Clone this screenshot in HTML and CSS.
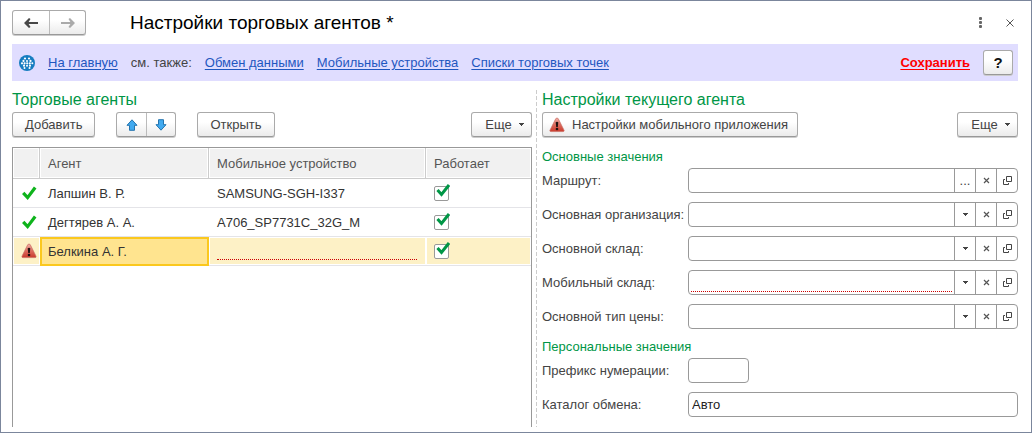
FILE: index.html
```html
<!DOCTYPE html>
<html lang="ru">
<head>
<meta charset="utf-8">
<title>Настройки торговых агентов</title>
<link rel="stylesheet" href="styles.css">
</head>
<body>
<svg class="sprite" aria-hidden="true">
  <defs>
    <linearGradient id="red" x1="0" y1="0" x2="0" y2="1">
      <stop offset="0" stop-color="#f3b3aa"/><stop offset="0.5" stop-color="#dc6a5d"/><stop offset="1" stop-color="#c93a2c"/>
    </linearGradient>
  </defs>
  <symbol id="warn" viewBox="0 0 16 16">
    <path d="M6.800 1.600Q8 .4 9.200 1.600L15 13.200Q15.400 14.600 14 14.600H2Q.6 14.600 1 13.200Z" fill="url(#red)" stroke="#c86a60" stroke-width=".7"/>
    <path d="M6.700 5.300Q8 4.300 9.300 5.300L8.800 10H7.200Z" fill="#1e1210"/>
    <circle cx="8" cy="12" r="1.300" fill="#1e1210"/>
  </symbol>
  <symbol id="ok" viewBox="0 0 16 16">
    <path d="M2.200 7.800L6.600 12.600L14.200 2.500" fill="none" stroke="#0eb31c" stroke-width="3.200"/>
  </symbol>
  <symbol id="up" viewBox="0 0 12 12">
    <path d="M6 .8L11 6.300H8.500V11.300H3.500V6.300H1Z" fill="#41aaf0" stroke="#2474ae"/>
  </symbol>
  <symbol id="caret" viewBox="0 0 5 3">
    <path d="M0 0H5V1H4V2H3V3H2V2H1V1H0Z" fill="#444"/>
  </symbol>
  <symbol id="clear" viewBox="0 0 7 7">
    <path d="M1 1L6 6M6 1L1 6" fill="none" stroke="#555" stroke-width="1.200"/>
  </symbol>
  <symbol id="open" viewBox="0 0 9 9">
    <path d="M3.500 .5H8.500V5.500H3.500ZM2 3.500H.5V8.500H5.500V7" fill="none" stroke="#444"/>
  </symbol>
</svg>

<div class="window">
  <header class="titlebar">
    <div class="button-group">
      <button class="nav" type="button" aria-label="Назад"><svg class="arrow" viewBox="0 0 14 10"><path d="M14 5H4" stroke="#484848" stroke-width="2"/><path d="M0 5L5 0L6.500 1L4 5L6.500 9L5 10Z" fill="#484848"/></svg></button>
      <button class="nav" type="button" aria-label="Вперед"><svg class="arrow" viewBox="0 0 14 10"><path d="M0 5H10" stroke="#aaa" stroke-width="2"/><path d="M14 5L9 0L7.500 1L10 5L7.500 9L9 10Z" fill="#aaa"/></svg></button>
    </div>
    <h1>Настройки торговых агентов *</h1>
    <button class="plain" type="button" aria-label="Меню"><svg class="dots" viewBox="0 0 3 11"><path d="M.5 0h2v.5h.5v2h-.5v.5h-2v-.5H0v-2h.5zM.5 4h2v.5h.5v2h-.5v.5h-2v-.5H0v-2h.5zM.5 8h2v.5h.5v2h-.5v.5h-2v-.5H0v-2h.5z" fill="#666"/></svg></button>
    <button class="plain" type="button" aria-label="Закрыть"><svg class="close" viewBox="0 0 8 8"><path d="M.5 .5L7.500 7.500M7.500 .5L.5 7.500" stroke="#555"/></svg></button>
  </header>

  <nav class="links">
    <svg class="logo" viewBox="0 0 16 16" aria-hidden="true">
      <circle cx="8" cy="8" r="8" fill="#167dc0"/>
      <g fill="#fff"><circle cx="6" cy="3.500" r="1.100"/><circle cx="10" cy="3.500" r="1.100"/><circle cx="4.500" cy="5.900" r="1.100"/><circle cx="8" cy="5.900" r="1"/><circle cx="11.500" cy="5.900" r="1.100"/><circle cx="3" cy="8.300" r="1.100"/><circle cx="5.600" cy="8.300" r="1.100"/><circle cx="8.200" cy="8.300" r="1.100"/><circle cx="10.800" cy="8.300" r="1.100"/><circle cx="13.300" cy="8.300" r="1"/><circle cx="5" cy="10.700" r="1.100"/><circle cx="8" cy="10.700" r="1"/><circle cx="11" cy="10.700" r="1.100"/><circle cx="5.500" cy="12.900" r="1"/><circle cx="10.500" cy="12.900" r="1"/></g>
    </svg>
    <a href="#home">На главную</a>
    <span>см. также:</span>
    <a href="#exchange">Обмен данными</a>
    <a href="#devices">Мобильные устройства</a>
    <a href="#points">Списки торговых точек</a>
    <a class="save" href="#save">Сохранить</a>
    <button class="btn help" type="button">?</button>
  </nav>

  <main class="panes">
    <section class="pane">
      <h2>Торговые агенты</h2>
      <div class="toolbar">
        <button class="btn" type="button">Добавить</button>
        <div class="button-group">
          <button class="move" type="button" aria-label="Вверх"><svg class="i12"><use href="#up"/></svg></button>
          <button class="move" type="button" aria-label="Вниз"><svg class="i12 flip"><use href="#up"/></svg></button>
        </div>
        <button class="btn" type="button">Открыть</button>
        <button class="btn more" type="button">Еще <svg class="caret"><use href="#caret"/></svg></button>
      </div>
      <div class="grid-box">
        <table>
          <colgroup><col class="c-state"><col class="c-agent"><col class="c-device"><col class="c-work"></colgroup>
          <thead><tr><th></th><th>Агент</th><th>Мобильное устройство</th><th>Работает</th></tr></thead>
          <tbody>
            <tr><td class="state"><svg class="i16"><use href="#ok"/></svg></td><td>Лапшин В. Р.</td><td>SAMSUNG-SGH-I337</td>
              <td><label class="check"><input type="checkbox" checked aria-label="Работает"><svg viewBox="0 0 16 16"><path d="M3.500 6L7.500 10.500L15 1" fill="none" stroke="#009646" stroke-width="3"/></svg></label></td></tr>
            <tr><td class="state"><svg class="i16"><use href="#ok"/></svg></td><td>Дегтярев А. А.</td><td>A706_SP7731C_32G_M</td>
              <td><label class="check"><input type="checkbox" checked aria-label="Работает"><svg viewBox="0 0 16 16"><path d="M3.500 6L7.500 10.500L15 1" fill="none" stroke="#009646" stroke-width="3"/></svg></label></td></tr>
            <tr class="selected"><td class="state"><svg class="i16"><use href="#warn"/></svg></td><td class="current">Белкина А. Г.</td><td><div class="required"></div></td>
              <td><label class="check"><input type="checkbox" checked aria-label="Работает"><svg viewBox="0 0 16 16"><path d="M3.500 6L7.500 10.500L15 1" fill="none" stroke="#009646" stroke-width="3"/></svg></label></td></tr>
          </tbody>
        </table>
      </div>
    </section>

    <div class="splitter"></div>

    <section class="pane">
      <h2>Настройки текущего агента</h2>
      <div class="toolbar">
        <button class="btn app" type="button"><svg class="i16"><use href="#warn"/></svg>Настройки мобильного приложения</button>
        <button class="btn more" type="button">Еще <svg class="caret"><use href="#caret"/></svg></button>
      </div>
      <h3>Основные значения</h3>
      <form class="form">
        <label for="route">Маршрут:</label>
        <div class="field"><input id="route" type="text"><button type="button" aria-label="Выбрать">...</button><button type="button" aria-label="Очистить"><svg class="i7"><use href="#clear"/></svg></button><button type="button" aria-label="Открыть"><svg class="i9"><use href="#open"/></svg></button></div>
        <label for="org">Основная организация:</label>
        <div class="field"><input id="org" type="text"><button type="button" aria-label="Выбрать"><svg class="caret"><use href="#caret"/></svg></button><button type="button" aria-label="Очистить"><svg class="i7"><use href="#clear"/></svg></button><button type="button" aria-label="Открыть"><svg class="i9"><use href="#open"/></svg></button></div>
        <label for="store">Основной склад:</label>
        <div class="field"><input id="store" type="text"><button type="button" aria-label="Выбрать"><svg class="caret"><use href="#caret"/></svg></button><button type="button" aria-label="Очистить"><svg class="i7"><use href="#clear"/></svg></button><button type="button" aria-label="Открыть"><svg class="i9"><use href="#open"/></svg></button></div>
        <label for="mobile">Мобильный склад:</label>
        <div class="field"><input id="mobile" class="missing" type="text"><button type="button" aria-label="Выбрать"><svg class="caret"><use href="#caret"/></svg></button><button type="button" aria-label="Очистить"><svg class="i7"><use href="#clear"/></svg></button><button type="button" aria-label="Открыть"><svg class="i9"><use href="#open"/></svg></button></div>
        <label for="price">Основной тип цены:</label>
        <div class="field"><input id="price" type="text"><button type="button" aria-label="Выбрать"><svg class="caret"><use href="#caret"/></svg></button><button type="button" aria-label="Очистить"><svg class="i7"><use href="#clear"/></svg></button><button type="button" aria-label="Открыть"><svg class="i9"><use href="#open"/></svg></button></div>
      </form>
      <h3>Персональные значения</h3>
      <form class="form">
        <label for="prefix">Префикс нумерации:</label>
        <div class="field short"><input id="prefix" type="text"></div>
        <label for="folder">Каталог обмена:</label>
        <div class="field"><input id="folder" type="text" value="Авто"></div>
      </form>
    </section>
  </main>
</div>
</body>
</html>
```
FILE: styles.css
```css
* { box-sizing: border-box; }
body { margin: 0; background: #fff; color: #444; }
body, button, input { font-family: "Liberation Sans", Arial, sans-serif; font-size: 13px; }
button, input { margin: 0; color: inherit; }
svg { display: block; flex: none; }
h1, h2, h3 { margin: 0; font-weight: normal; }
.sprite { position: absolute; width: 0; height: 0; }

.window {
  display: flex;
  flex-direction: column;
  min-height: 100vh;
  padding: 9px 13px 5px 11px;
  border: 1px solid #7b869c;
}

.titlebar { display: flex; align-items: center; height: 25px; margin-bottom: 9px; }
.titlebar h1 { flex: 1; margin-left: 44px; font-size: 19px; line-height: 24px; color: #000; }
.plain { display: flex; align-items: center; justify-content: center; width: 30px; height: 24px; padding: 0; border: 0; background: none; }
.plain:last-child { width: 16px; margin-left: 7px; }
.arrow { width: 14px; height: 10px; }
.dots { width: 3px; height: 11px; }
.close { width: 8px; height: 8px; }

.btn, .button-group {
  border: 1px solid #aaa;
  border-bottom-color: #999;
  border-radius: 3px;
  background: linear-gradient(#fff 40%, #ebebeb);
  box-shadow: 0 1px 0 #ccc;
}
.btn { display: flex; align-items: center; justify-content: center; height: 25px; padding: 0 12px; }
.button-group { display: flex; height: 25px; }
.button-group button { display: flex; align-items: center; justify-content: center; padding: 0; border: 0; background: none; }
.button-group button + button { border-left: 1px solid #bbb; }
.nav { width: 36px; }
.move { width: 29px; }

.links { display: flex; align-items: center; gap: 13px; height: 37px; padding: 0 5px 0 7px; background: #e0ddff; }
.links a { color: #1f57c0; text-underline-offset: 2px; }
.links .save { margin-left: auto; color: #f00; font-weight: bold; }
.logo { width: 16px; height: 16px; }
.help { width: 30px; padding: 0; font-size: 15px; font-weight: bold; color: #111; }

.panes { display: grid; grid-template-columns: 520fr 10px 476fr; flex: 1; padding-top: 9px; }
.pane { display: flex; flex-direction: column; min-width: 0; }
.splitter { width: 1px; margin-left: 4px; background: repeating-linear-gradient(#ccc 0 4px, transparent 4px 6px); }
h2 { font-size: 16px; line-height: 20px; color: #009646; }
.toolbar { display: flex; gap: 21px; margin: 2px 0 10px; }
.more { width: 61px; padding: 0 6px 0 12px; gap: 7px; margin-left: auto; }
.app { gap: 7px; padding: 0 9px 0 6px; }
.caret { width: 5px; height: 3px; }
.i7 { width: 7px; height: 7px; }
.i9 { width: 9px; height: 9px; }
.i12 { width: 12px; height: 12px; }
.i16 { width: 16px; height: 16px; }
.flip { transform: rotate(180deg); }

.grid-box { flex: 1; border: 1px solid #999; border-bottom: 0; }
table { width: 100%; table-layout: fixed; border-collapse: separate; border-spacing: 0; color: #333; }
.c-state { width: 27px; }
.c-agent { width: 169px; }
.c-device { width: 217px; }
th, td { padding: 0 8px; text-align: left; font-weight: normal; border-bottom: 1px solid #e4e4e8; }
th { height: 31px; border-bottom-color: #ccc; border-right: 1px solid #ccc; background: #f1f1f1; box-shadow: inset 0 0 0 1px #fff; color: #555; }
th:last-child { border-right: 0; }
td { height: 29px; }
.state { padding: 0 0 0 8px; }
.selected td { background: #fdf1c6; box-shadow: inset 0 0 0 1px #fff; }
.selected .current { padding: 0 6px; border: solid #fbc81e; border-width: 2px; background: #ffe48f; box-shadow: none; }
.required { height: 18px; margin-right: 1px; border-bottom: 1px dotted #c00; }
.check { display: grid; width: 16px; height: 18px; }
.check input, .check svg { grid-area: 1 / 1; }
.check input { appearance: none; align-self: center; width: 15px; height: 15px; border: 1px solid #999; border-radius: 2px; background: #fff; }
.check svg { width: 16px; height: 16px; pointer-events: none; }

h3 { font-size: 13px; line-height: 20px; margin-bottom: 1px; color: #009646; }
.form { display: grid; grid-template-columns: 146px 1fr; row-gap: 9px; align-items: center; }
.form + h3 { margin-top: 8px; }
.field { display: flex; height: 25px; border: 1px solid #999; border-radius: 4px; overflow: hidden; }
.short { width: 61px; }
.field input { flex: 1; min-width: 0; padding: 0 3px; border: 0; background: none; color: #222; }
.field .missing { margin: 0 2px 2px; border-bottom: 1px dotted #c00; }
.field button { display: flex; align-items: center; justify-content: center; width: 21px; padding: 0; border: 0; border-left: 1px solid #999; background: none; }
```
